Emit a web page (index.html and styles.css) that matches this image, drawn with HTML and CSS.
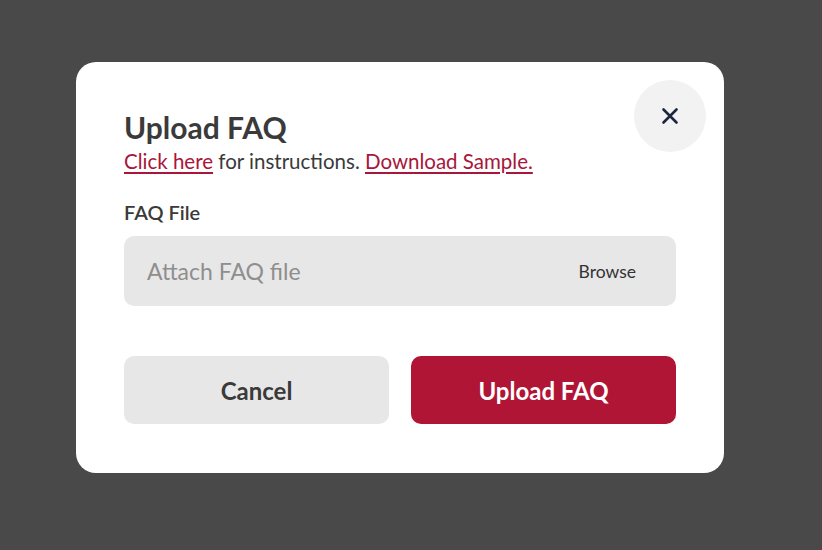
FILE: index.html
```html
<!DOCTYPE html>
<html>
<head>
    <title>Upload FAQ</title>
    <link rel="stylesheet" href="styles.css">
</head>
<body>
    <div class="overlay">
        <div class="modal">
            <button class="close-btn" aria-label="Close">
                <svg width="18" height="18" viewBox="0 0 18 18">
                    <path d="M2.5 2.5 L15.5 15.5 M15.5 2.5 L2.5 15.5" stroke="#1c2640" stroke-width="2.6" stroke-linecap="round"/>
                </svg>
            </button>

            <h1 class="modal-title">Upload FAQ</h1>
            <p class="modal-sub"><a href="#">Click here</a> for instructions. <a href="#">Download Sample.</a></p>

            <label class="field-label" for="faqFile">FAQ File</label>
            <div class="file-box">
                <span class="file-placeholder">Attach FAQ file</span>
                <span class="file-browse">Browse</span>
            </div>

            <div class="actions">
                <button class="btn btn-cancel">Cancel</button>
                <button class="btn btn-upload">Upload FAQ</button>
            </div>
        </div>
    </div>
</body>
</html>
```

FILE: styles.css
```css
body {
    margin: 0;
    padding: 0;
    background-color: #494949;
    font-family: Lato, "Noto Sans", Arial, sans-serif;
    color: #3a3a3a;
}
.overlay {
    width: 822px;
    height: 550px;
    padding-top: 62px;
    padding-left: 76px;
    box-sizing: border-box;
}
.modal {
    position: relative;
    width: 648px;
    box-sizing: border-box;
    padding: 49px 48px 49px;
    background-color: #fff;
    border-radius: 20px;
}
.close-btn {
    position: absolute;
    top: 18px;
    right: 18px;
    width: 72px;
    height: 72px;
    border: none;
    border-radius: 50%;
    background-color: #f2f2f2;
    display: flex;
    align-items: center;
    justify-content: center;
    padding: 0;
    cursor: pointer;
}
.modal-title {
    margin: 0;
    font-size: 30px;
    font-weight: 700;
    line-height: 32px;
    color: #3a3a3a;
}
.modal-sub {
    margin: 5px 0 0;
    font-size: 20.5px;
    line-height: 26px;
    color: #3a3a3a;
}
.modal-sub a {
    color: #a8163a;
    text-decoration: underline;
    text-underline-offset: 3px;
}
.field-label {
    display: block;
    margin-top: 25px;
    font-size: 20px;
    font-weight: 600;
    line-height: 26px;
}
.file-box {
    margin-top: 11px;
    height: 70px;
    border-radius: 10px;
    background-color: #e8e7e8;
    display: flex;
    align-items: center;
    justify-content: space-between;
    padding: 0 40px 0 23px;
}
.file-placeholder {
    font-size: 23px;
    color: #8e8e8e;
}
.file-browse {
    font-size: 17.5px;
    color: #333;
}
.actions {
    display: flex;
    gap: 22px;
    margin-top: 50px;
}
.btn {
    flex: 1;
    height: 68px;
    border: none;
    border-radius: 10px;
    font-family: Lato, "Noto Sans", Arial, sans-serif;
    font-size: 24px;
    font-weight: 700;
    cursor: pointer;
}
.btn-cancel {
    background-color: #e8e7e8;
    color: #3a3a3a;
}
.btn-upload {
    background-color: #b01536;
    color: #fff;
}
```
